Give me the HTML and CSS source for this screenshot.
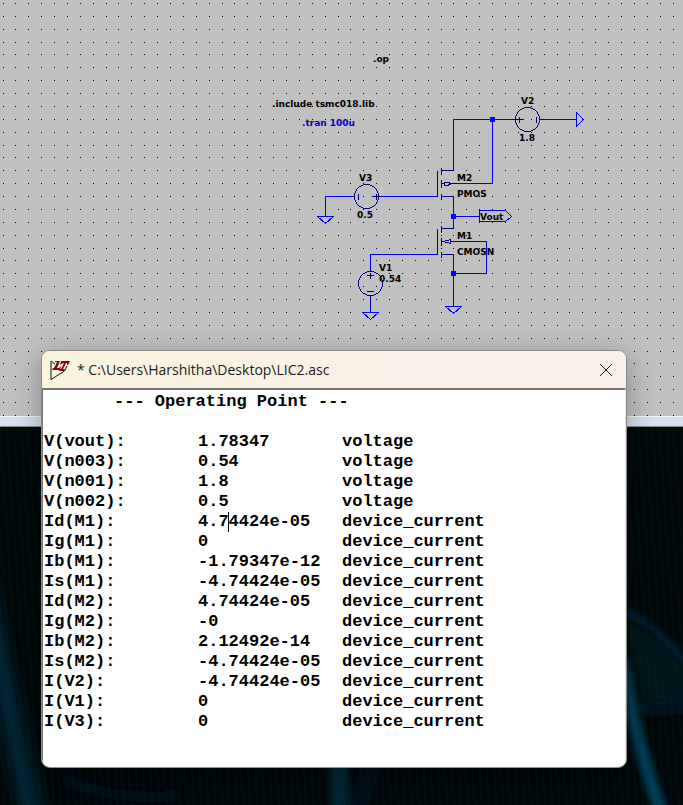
FILE: index.html
```
<!DOCTYPE html>
<html lang="en">
<head>
<meta charset="utf-8">
<meta name="viewport" content="width=device-width, initial-scale=1">
<title>LIC2.asc - Operating Point</title>
<link rel="stylesheet" href="styles.css">
</head>
<body>
<main class="desktop">
  <section class="schematic" aria-label="Schematic">
    <svg class="sheet" aria-hidden="true"><path id="grid" class="grid"/></svg>
    <svg class="sheet">
      <g class="wires" transform="translate(.5 .5)">
        <path d="M453 166V119H511M544 119H576M492 119V183H457M453 200V224M453 216H479M382 196H437M350 196H325V216M370 266V254H437M370 300V312M457 241H486V273H453M453 258V306"/>
        <path d="M576 112V126L583 119ZM317 216H333L325 223ZM362 312H378L370 319ZM445 306H461L453 313ZM479 210H505L511 216L505 221H479Z"/>
      </g>
      <g class="symbols" transform="translate(.5 .5)">
        <circle cx="527" cy="119" r="12"/>
        <path d="M511 119H523M519 116V122M536 116V122M539 119H544"/>
        <circle cx="366" cy="196" r="12"/>
        <path d="M371 196H382M376 193V199M358 193V199M350 196H354"/>
        <circle cx="370" cy="283" r="12"/>
        <path d="M366 275H373M370 272V278M366 291H373M370 266V271M370 295V300"/>
        <path d="M437 170V196M441 167V174M441 179V187M441 193V199M441 170H453V166M441 196H453V200M441 183H444M450 183H457M444 182V185H447L451 183L447 182Z"/>
        <path d="M437 228V254M441 225V232M441 237V245M441 251V257M441 228H453V224M441 254H453V258M441 241H444M450 241H457M443 241L450 239V243Z"/>
      </g>
      <g class="nodes">
        <rect x="490" y="117" width="5" height="5"/>
        <rect x="451" y="214" width="5" height="5"/>
        <rect x="451" y="271" width="5" height="5"/>
      </g>
      <g class="labels">
        <text x="373" y="62">.op</text>
        <text x="272" y="107">.include tsmc018.lib</text>
        <text class="inactive" x="302" y="126">.tran 100u</text>
        <text x="521" y="104">V2</text>
        <text x="519" y="141">1.8</text>
        <text x="457" y="181">M2</text>
        <text x="457" y="197">PMOS</text>
        <text x="359" y="181">V3</text>
        <text x="357" y="218">0.5</text>
        <text x="457" y="239">M1</text>
        <text x="457" y="255">CMOSN</text>
        <text x="379" y="271">V1</text>
        <text x="379" y="282">0.54</text>
        <text x="480" y="220">Vout</text>
      </g>
    </svg>
  </section>
  <div class="frame-edge"></div>
  <div class="wallpaper">
    <svg class="aurora" viewBox="0 0 683 379" preserveAspectRatio="none" aria-hidden="true">
      <defs>
        <filter id="soft" filterUnits="userSpaceOnUse" x="-60" y="-60" width="803" height="520"><feGaussianBlur stdDeviation="7"/></filter>
        <filter id="fine" filterUnits="userSpaceOnUse" x="-60" y="-60" width="803" height="520"><feGaussianBlur stdDeviation="3"/></filter>
      </defs>
      <path d="M-20 150Q4 260 36 400" stroke="#031b2a" stroke-width="28" fill="none" filter="url(#soft)"/>
      <path d="M-8 180Q6 270 32 400" stroke="#042838" stroke-width="8" fill="none" filter="url(#fine)"/>
      <path d="M60 350Q100 375 180 370" stroke="#020f1e" stroke-width="12" fill="none" filter="url(#soft)"/>
      <path d="M338 330L342 400" stroke="#04283a" stroke-width="18" fill="none" filter="url(#fine)"/>
      <path d="M372 340L350 400" stroke="#021426" stroke-width="12" fill="none" filter="url(#soft)"/>
      <path d="M622 184Q660 200 692 244" stroke="#04284a" stroke-width="6" fill="none" filter="url(#fine)"/>
      <path d="M622 190Q660 200 692 250V284L640 286Z" fill="#02121a" filter="url(#soft)"/>
      <path d="M636 282L700 280" stroke="#03182c" stroke-width="7" fill="none" filter="url(#fine)"/>
      <path d="M622 235Q636 320 666 400" stroke="#04405c" stroke-width="13" fill="none" filter="url(#fine)"/>
    </svg>
  </div>
  <section class="window" aria-labelledby="window-title">
    <header class="titlebar">
      <svg class="app-icon" viewBox="0 0 20 20" aria-hidden="true">
        <path d="M1 1V19.500L14.500 11L17 6M1 1L5 4" fill="none" stroke="#111" stroke-width="1"/>
        <path d="M5 1H10L7 8H9L11 6L10 10H2L3 8H4L7 2H5Z" fill="#86060c"/>
        <path d="M11 1H20L18 5H17V3H16L13 9H15L14 11H9L10 9H11L14 3H13L10 5Z" fill="#86060c"/>
      </svg>
      <h1 id="window-title" class="title">* C:\Users\Harshitha\Desktop\LIC2.asc</h1>
      <button class="close" type="button" aria-label="Close">
        <svg viewBox="0 0 12 12" aria-hidden="true"><path d="M0 0L12 12M12 0L0 12"/></svg>
      </button>
    </header>
    <div class="report">
      <table>
        <caption>--- Operating Point ---</caption>
        <colgroup><col class="col-name"><col class="col-value"><col></colgroup>
        <tbody>
          <tr><th scope="row">V(vout):</th><td>1.78347</td><td>voltage</td></tr>
          <tr><th scope="row">V(n003):</th><td>0.54</td><td>voltage</td></tr>
          <tr><th scope="row">V(n001):</th><td>1.8</td><td>voltage</td></tr>
          <tr><th scope="row">V(n002):</th><td>0.5</td><td>voltage</td></tr>
          <tr><th scope="row">Id(M1):</th><td>4.7<span class="caret"></span>4424e-05</td><td>device_current</td></tr>
          <tr><th scope="row">Ig(M1):</th><td>0</td><td>device_current</td></tr>
          <tr><th scope="row">Ib(M1):</th><td>-1.79347e-12</td><td>device_current</td></tr>
          <tr><th scope="row">Is(M1):</th><td>-4.74424e-05</td><td>device_current</td></tr>
          <tr><th scope="row">Id(M2):</th><td>4.74424e-05</td><td>device_current</td></tr>
          <tr><th scope="row">Ig(M2):</th><td>-0</td><td>device_current</td></tr>
          <tr><th scope="row">Ib(M2):</th><td>2.12492e-14</td><td>device_current</td></tr>
          <tr><th scope="row">Is(M2):</th><td>-4.74424e-05</td><td>device_current</td></tr>
          <tr><th scope="row">I(V2):</th><td>-4.74424e-05</td><td>device_current</td></tr>
          <tr><th scope="row">I(V1):</th><td>0</td><td>device_current</td></tr>
          <tr><th scope="row">I(V3):</th><td>0</td><td>device_current</td></tr>
        </tbody>
      </table>
    </div>
  </section>
</main>
<script src="grid.js"></script>
</body>
</html>
```

FILE: styles.css
```
* { box-sizing: border-box; }

body { margin: 0; background: #01070a; }

.desktop {
  position: relative;
  display: grid;
  grid-template-rows: 416px auto 1fr;
  min-height: 100vh;
  overflow: hidden;
}

.schematic { position: relative; background: #c0c0c0; overflow: hidden; }
.sheet { position: absolute; inset: 0; width: 100%; height: 100%; }
.grid { fill: #000; shape-rendering: crispEdges; }
.wires, .symbols { fill: none; stroke-width: 1; shape-rendering: crispEdges; }
.wires { stroke: #0000ff; }
.symbols { stroke: #000080; }
.nodes { fill: #0000ff; shape-rendering: crispEdges; }
.labels { font: bold 9px "DejaVu Sans", sans-serif; fill: #000; }
.labels .inactive { fill: #0000c8; }

.frame-edge {
  height: 11px;
  background: #d3e0ef;
  border-top: 1px solid #f4f4f4;
  border-bottom: 1px solid #8a8a8a;
}

.wallpaper { position: relative; background: #01070a; }
.wallpaper::after {
  content: "";
  position: absolute;
  inset: 0;
  background: repeating-linear-gradient(86deg, rgba(0, 0, 0, 0) 0 3px, rgba(0, 40, 20, .25) 5px, rgba(0, 0, 0, 0) 7px);
}
.aurora { position: absolute; inset: 0; width: 100%; height: 100%; }

.window {
  position: absolute;
  top: 350px;
  left: 41px;
  right: 56px;
  border: 1px solid #8c8c8c;
  border-radius: 9px;
  background: #fff;
  overflow: hidden;
  box-shadow: 0 6px 28px rgba(0, 0, 0, .3);
}

.titlebar {
  display: flex;
  align-items: center;
  gap: 7px;
  height: 37px;
  padding: 0 14px 0 8px;
  background: linear-gradient(90deg, #f9f4dc, #faf0e6 50%, #faf0eb);
}
.app-icon { width: 20px; height: 20px; flex: none; }
.title { flex: 1; margin: 0; font: 14px/20px "Open Sans", sans-serif; color: #1b1b1b; white-space: nowrap; }
.close { display: flex; padding: 0; border: 0; background: none; }
.close svg { width: 12px; height: 12px; overflow: visible; fill: none; stroke: #1b1b1b; stroke-width: 1; }

.report { border-top: 2px solid #747474; border-left: 1px solid #747474; border-right: 1px solid #e3e3e3; padding: 0 0 35px 1px; }
.report table { width: 100%; table-layout: fixed; border-collapse: collapse; font: bold 17px/20px "Liberation Mono", monospace; color: #000; }
.report caption { padding: 2px 0 20px 70px; text-align: left; }
.report th, .report td { padding: 0; text-align: left; font-weight: bold; white-space: nowrap; }
.col-name { width: 154px; }
.col-value { width: 144px; }
.caret { position: relative; }
.caret::after { content: ""; position: absolute; left: -1px; top: 0; width: 1px; height: 20px; background: #000; }
```

FILE: grid.js
```
// Draws the sheet's snap grid: one-pixel dots, snapped to whole pixels.
function drawGrid() {
  const grid = document.getElementById("grid");
  const { clientWidth, clientHeight } = document.querySelector(".schematic");
  let d = "";
  for (let j = 0, y = 3; y < clientHeight; j++, y = Math.round(2.9 + 12.875 * j)) {
    for (let i = 0, x = 3; x < clientWidth; i++, x = Math.round(2.5 + 12.885 * i)) {
      d += `M${x} ${y}h1v1h-1z`;
    }
  }
  grid.setAttribute("d", d);
}
drawGrid();
window.addEventListener("resize", drawGrid);
```
